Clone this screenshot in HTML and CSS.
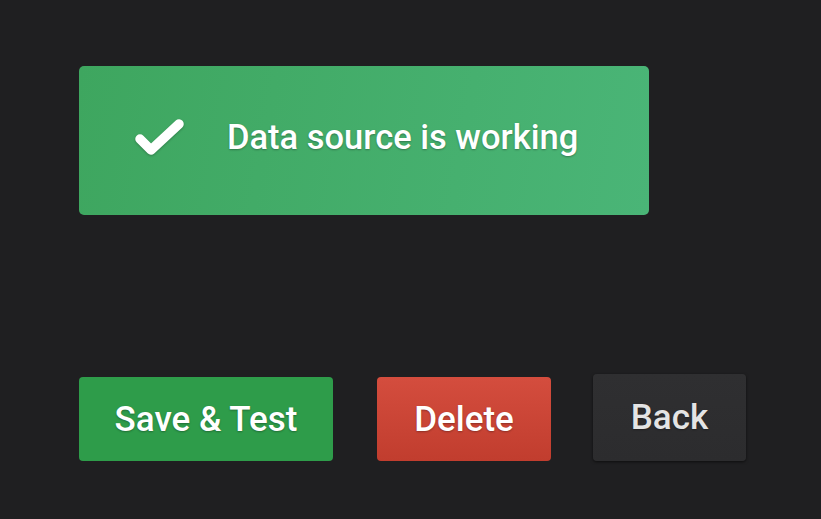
FILE: index.html
```html
<!DOCTYPE html>
<html>
<head>
<meta charset="utf-8">
<link rel="stylesheet" href="styles.css">
</head>
<body>
<div class="page">
  <div class="alert">
    <div class="alert-icon">
      <svg width="52" height="42" viewBox="0 0 52 42">
        <polyline points="6,22 17,33 45,7" fill="none" stroke="#fff" stroke-width="9.5" stroke-linecap="round" stroke-linejoin="round"/>
      </svg>
    </div>
    <div class="alert-title">Data source is working</div>
  </div>
  <div class="actions">
    <button class="btn btn-success">Save &amp; Test</button>
    <button class="btn btn-danger">Delete</button>
    <button class="btn btn-inverse">Back</button>
  </div>
</div>
</body>
</html>
```
FILE: styles.css
```css
html, body {
  margin: 0;
  padding: 0;
  background: #1f1f21;
}
body {
  font-family: Roboto, "Liberation Sans", sans-serif;
  width: 821px;
  height: 519px;
  overflow: hidden;
}
.page {
  padding: 66px 0 0 79px;
}
.alert {
  width: 570px;
  height: 149px;
  box-sizing: border-box;
  border-radius: 5px;
  background: linear-gradient(100deg, #3ea65f 0%, #4ab577 100%);
  display: flex;
  align-items: center;
  padding-left: 55px;
  color: #fff;
}
.alert-icon {
  width: 52px;
  height: 42px;
  margin-right: 41px;
  margin-top: -6px;
  filter: drop-shadow(0 1px 1px rgba(0,0,0,0.25));
}
.alert-icon svg { display: block; }
.alert-title {
  font-size: 34.5px;
  font-weight: 500;
  text-shadow: 0 1px 2px rgba(0,0,0,0.3);
  margin-top: -8px;
}
.actions {
  margin-top: 159px;
  display: flex;
  align-items: flex-end;
}
.btn {
  font-family: inherit;
  font-size: 35px;
  font-weight: 500;
  color: #fff;
  border: none;
  border-radius: 4px;
  height: 84px;
  padding: 0;
  text-shadow: 0 1px 2px rgba(0,0,0,0.3);
  margin-right: 44px;
}
.btn-success {
  width: 254px;
  background: #2e9c4a;
}
.btn-danger {
  width: 174px;
  background: linear-gradient(180deg, #d44d3e 0%, #c13d2e 100%);
  margin-right: 42px;
}
.btn-inverse {
  width: 153px;
  height: 87px;
  background: linear-gradient(180deg, #2f2f31 0%, #2c2c2e 100%);
  color: #e4e4e4;
  box-shadow: 0 1px 3px rgba(0,0,0,0.6);
  margin-right: 0;
}
```
